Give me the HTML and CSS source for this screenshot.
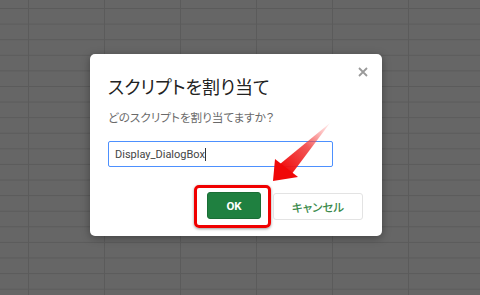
FILE: index.html
```html
<!DOCTYPE html>
<html lang="ja">
<head>
<meta charset="utf-8">
<link rel="stylesheet" href="styles.css">
</head>
<body>
<div class="sheet">
  <div class="dialog">
    <button class="close" aria-label="閉じる">
      <svg width="10" height="10" viewBox="0 0 10 10"><path d="M1 1L9 9M9 1L1 9" stroke="#9a9a9a" stroke-width="1.8" fill="none"/></svg>
    </button>
    <h1 class="title">スクリプトを割り当て</h1>
    <p class="question">どのスクリプトを割り当てますか？</p>
    <div class="field"><span class="value">Display_DialogBox</span><span class="caret"></span></div>
    <div class="actions">
      <div class="highlight">
        <button class="btn ok">OK</button>
      </div>
      <button class="btn cancel">キャンセル</button>
    </div>
    <svg class="arrow" width="76" height="70" viewBox="0 0 76 70">
      <defs>
        <linearGradient id="ag" x1="1" y1="0" x2="0" y2="1">
          <stop offset="0" stop-color="#ff7070" stop-opacity="0.1"/>
          <stop offset="0.45" stop-color="#f03a3a" stop-opacity="0.85"/>
          <stop offset="1" stop-color="#f00000"/>
        </linearGradient>
      </defs>
      <path d="M68 1 L18 42 L29 53 Z" fill="url(#ag)"/>
      <path d="M13 37 L11 59 L36 55 Z" fill="#f00808"/>
    </svg>
  </div>
</div>
</body>
</html>
```
FILE: styles.css
```css
html, body {
  margin: 0;
  padding: 0;
}
body {
  width: 480px;
  height: 295px;
  overflow: hidden;
  font-family: "Noto Sans CJK JP", "Noto Sans", sans-serif;
}
.sheet {
  width: 480px;
  height: 295px;
  box-sizing: border-box;
  padding: 54px 0 0 90px;
  background-color: #666666;
  background-image:
    linear-gradient(to right, #5b5b5b 1px, transparent 1px),
    linear-gradient(to bottom, #5b5b5b 1px, transparent 1px);
  background-size: 76px 15.6px;
  background-position: 28px 8px;
}
.dialog {
  position: relative;
  width: 292px;
  height: 182px;
  box-sizing: border-box;
  padding: 19px 18px 0 18px;
  background: #fff;
  border-radius: 5px;
  box-shadow: 0 2px 8px rgba(0,0,0,0.35);
}
.close {
  position: absolute;
  top: 12px;
  right: 13px;
  width: 12px;
  height: 12px;
  padding: 0;
  border: 0;
  background: none;
  display: flex;
  align-items: center;
  justify-content: center;
}
.title {
  margin: 0;
  font-size: 18px;
  font-weight: 400;
  line-height: 26px;
  color: #222;
  font-feature-settings: "palt";
}
.question {
  margin: 10px 0 0 0;
  font-size: 11.6px;
  line-height: 16px;
  color: #6a6a6a;
  font-feature-settings: "palt";
}
.field {
  margin-top: 16px;
  width: 225px;
  height: 26px;
  box-sizing: border-box;
  border: 1px solid #4d90fe;
  border-radius: 2px;
  padding: 0 6px;
  display: flex;
  align-items: center;
  font-family: Roboto, "Noto Sans", sans-serif;
  font-size: 11px;
  color: #444;
}
.caret {
  width: 1px;
  height: 13px;
  background: #333;
}
.actions {
  margin-top: 18px;
  display: flex;
  justify-content: flex-end;
  align-items: center;
  gap: 2px;
  padding-right: 1px;
}
.highlight {
  border: 3px solid #f00000;
  border-radius: 5px;
  padding: 4px 7px 6px 10px;
  box-shadow: 0 1px 3px rgba(0,0,0,0.4);
  display: flex;
}
.btn {
  height: 27px;
  border-radius: 3px;
  font-family: Roboto, "Noto Sans CJK JP", sans-serif;
  font-size: 11.5px;
  font-weight: 700;
  padding: 0;
}
.ok {
  width: 54px;
  background: #1f8040;
  color: #fff;
  border: 1px solid #1a6e36;
}
.cancel {
  width: 90px;
  background: #fff;
  color: #3b8a4b;
  border: 1px solid #e3e3e3;
  font-family: "Noto Sans CJK JP", sans-serif;
  font-weight: 500;
  font-feature-settings: "palt";
}
.arrow {
  position: absolute;
  left: 172px;
  top: 68px;
}
```
